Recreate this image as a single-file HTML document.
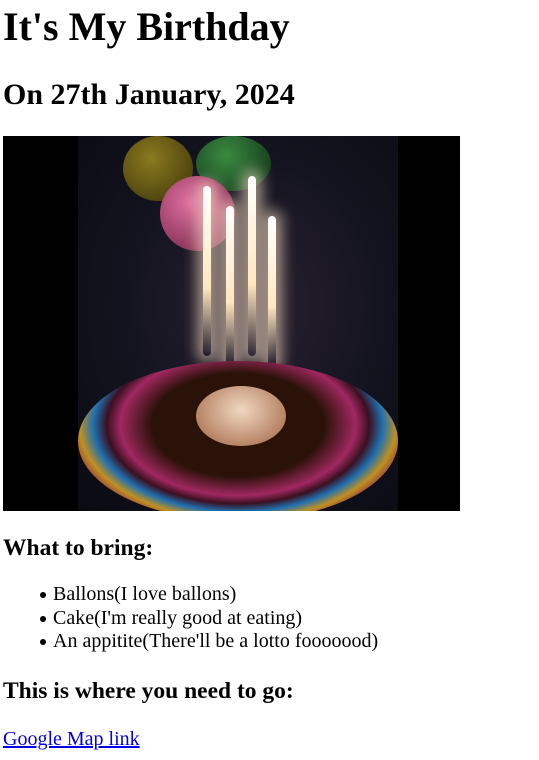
<!DOCTYPE html>
<html><head><meta charset="utf-8"><style>
html,body{margin:0;padding:0;background:#fff;width:539px;height:760px;overflow:hidden;font-family:"Liberation Serif",serif;color:#000}
.a{position:absolute;white-space:nowrap}
h1,h2,h3{margin:0;font-weight:bold}
.img{position:absolute;left:3px;top:136px;width:457px;height:375px;background:#000;overflow:hidden}
.inner{position:absolute;left:75px;top:0;width:320px;height:375px;background:radial-gradient(ellipse at 55% 45%,#2a2030 0%,#141420 50%,#0a0a12 100%)}
.b{position:absolute;border-radius:50%}
.sp{position:absolute;width:8px;background:linear-gradient(#fff,#ffe8c0 60%,rgba(255,200,120,0));border-radius:4px;box-shadow:0 0 14px 6px rgba(255,230,200,.6)}
ul{margin:0;padding:0;list-style:none}
li{position:relative}
li:before{content:"";position:absolute;left:-13px;top:9px;width:6px;height:6px;border-radius:50%;background:#000}
a{color:#0000ee}
</style></head><body>
<h1 class="a" style="left:3px;top:5px;font-size:40px;line-height:44px">It's My Birthday</h1>
<h2 class="a" style="left:3px;top:80px;font-size:30px;line-height:30px">On 27th January, 2024</h2>
<div class="img"><div class="inner">
<div class="b" style="left:45px;top:0;width:70px;height:65px;background:radial-gradient(circle at 40% 35%,#8a7a20,#3a3208)"></div>
<div class="b" style="left:118px;top:0;width:75px;height:55px;background:radial-gradient(circle at 40% 35%,#3a8a40,#103018)"></div>
<div class="b" style="left:82px;top:40px;width:75px;height:75px;background:radial-gradient(circle at 40% 35%,#e070a0,#6a2040)"></div>
<div class="sp" style="left:125px;top:50px;height:170px"></div>
<div class="sp" style="left:148px;top:70px;height:160px"></div>
<div class="sp" style="left:170px;top:40px;height:180px"></div>
<div class="sp" style="left:190px;top:80px;height:150px"></div>
<div class="b" style="left:0;top:225px;width:320px;height:160px;background:radial-gradient(ellipse at 50% 40%,#2a1208 38%,#a02860 52%,#3a1020 58%,#2070b0 64%,#c09020 70%,#801850 78%,#40102a 90%)"></div>
<div class="b" style="left:118px;top:250px;width:90px;height:60px;background:radial-gradient(ellipse at 50% 40%,#f0d8c0,#a06040)"></div>
</div></div>
<h3 class="a" style="left:3px;top:536px;font-size:23.5px;line-height:24px">What to bring:</h3>
<ul class="a" style="left:53px;top:583px;font-size:20px;line-height:23.5px">
<li>Ballons(I love ballons)</li>
<li>Cake(I'm really good at eating)</li>
<li>An appitite(There'll be a lotto fooooood)</li>
</ul>
<h3 class="a" style="left:3px;top:679px;font-size:23.5px;line-height:24px">This is where you need to go:</h3>
<div class="a" style="left:3px;top:727px;font-size:20px;line-height:24px"><a href="#">Google Map link</a></div>
</body></html>
